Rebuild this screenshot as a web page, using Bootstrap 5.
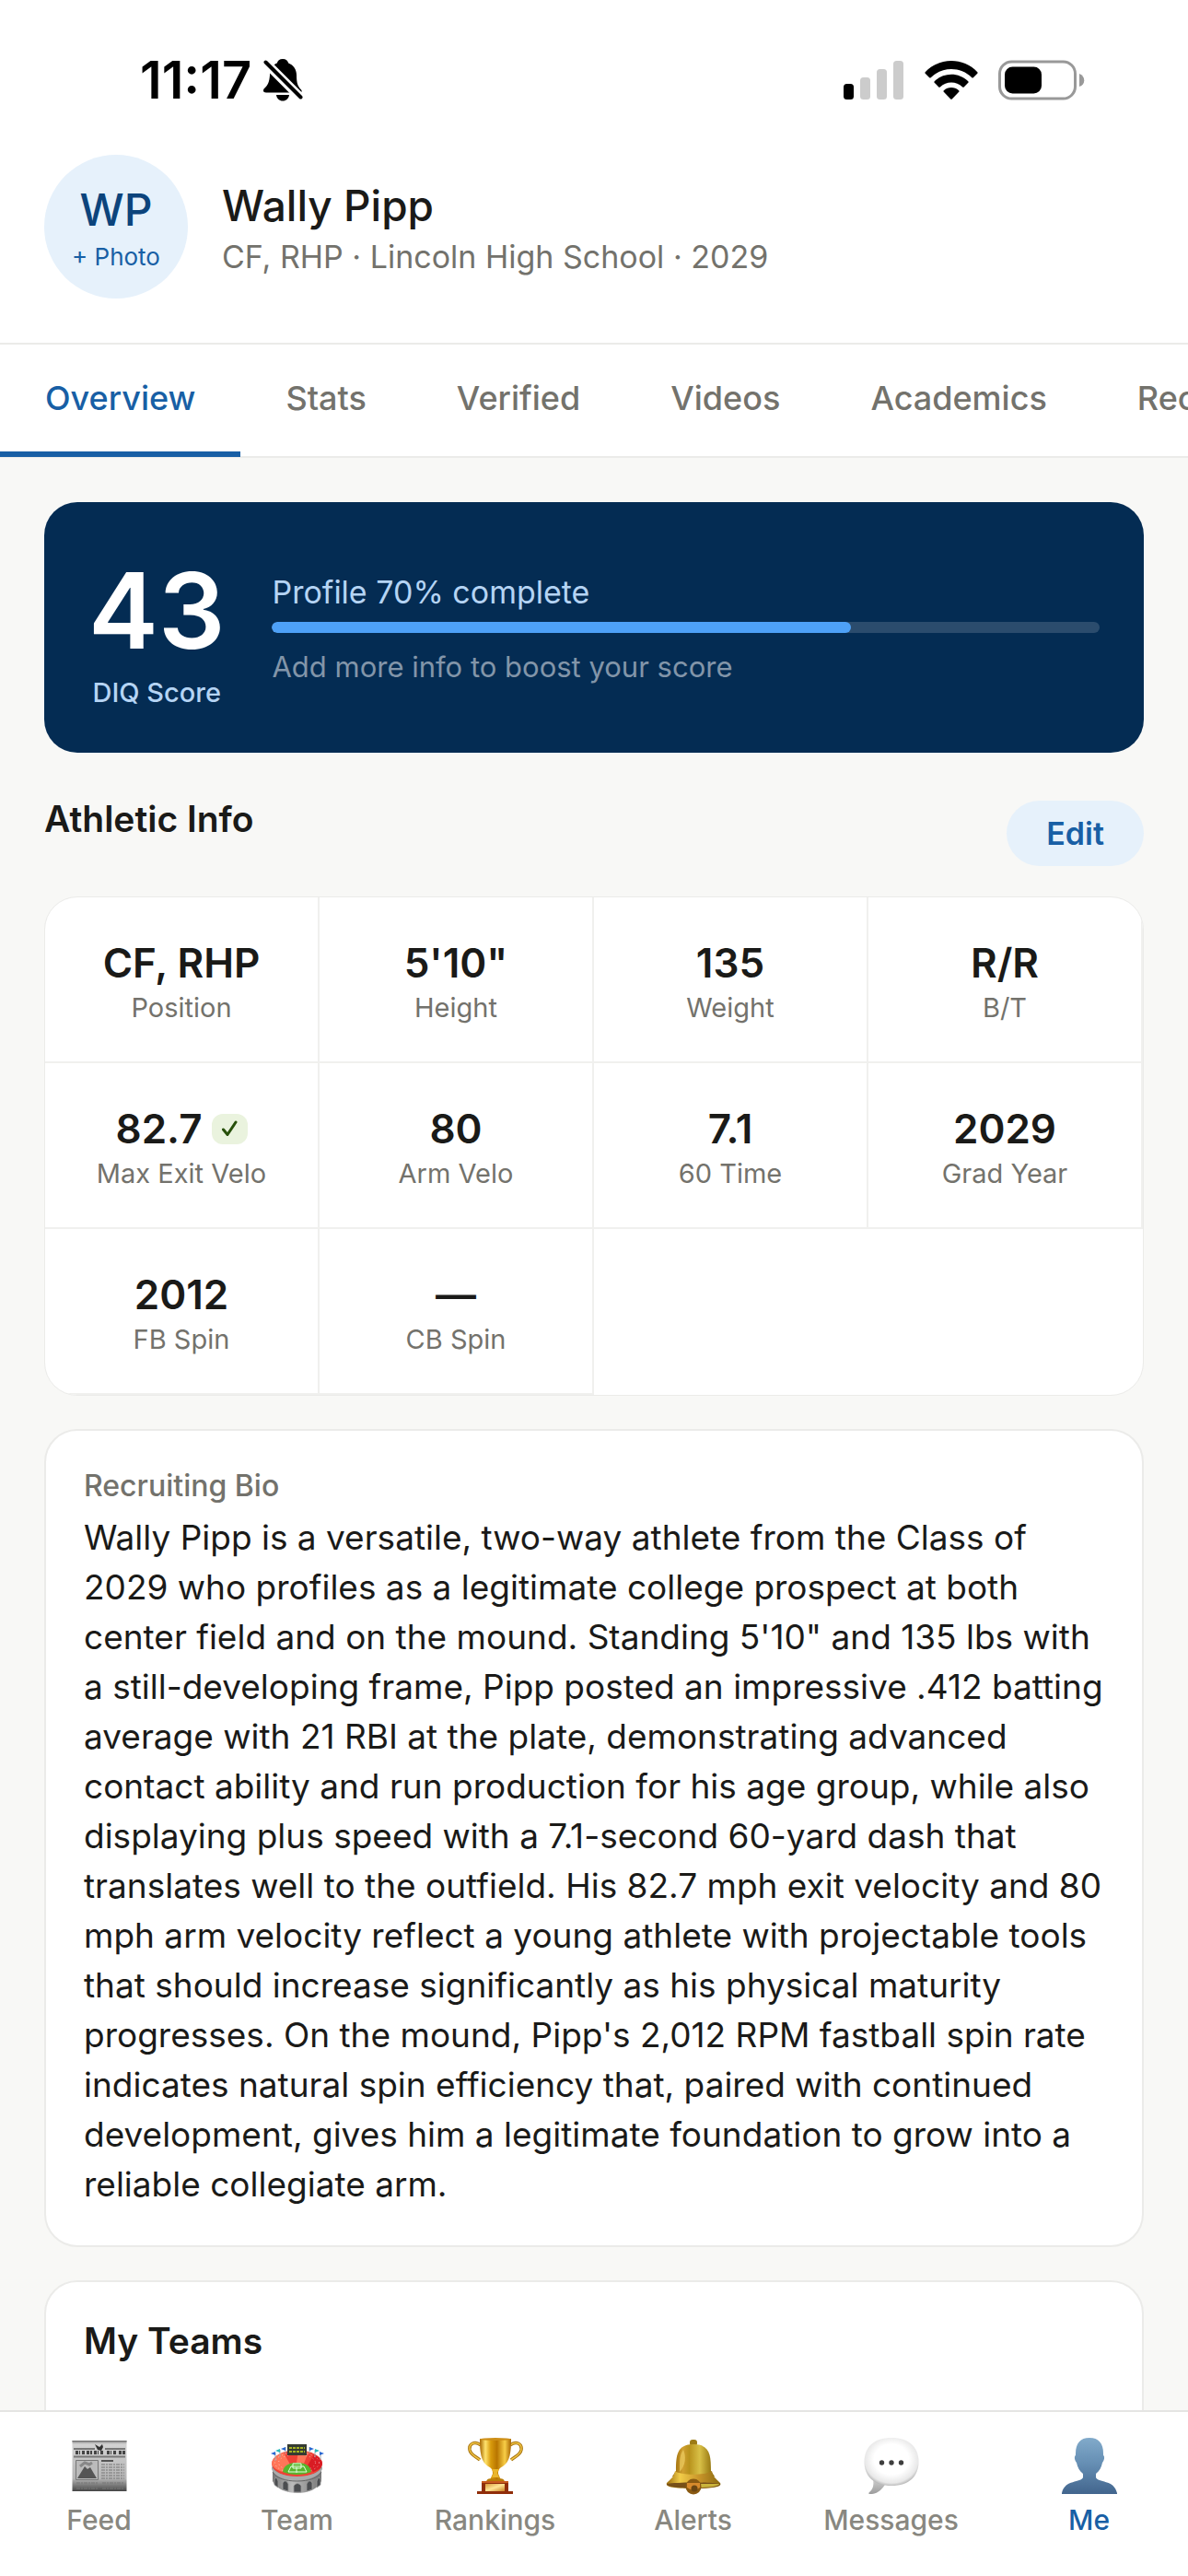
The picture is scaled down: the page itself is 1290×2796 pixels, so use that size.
<!DOCTYPE html>
<html lang="en">
<head>
<meta charset="utf-8">
<meta name="viewport" content="width=device-width, initial-scale=1">
<title>Wally Pipp – Player Profile</title>
<link rel="stylesheet" href="https://cdn.jsdelivr.net/npm/bootstrap@5.3.0/dist/css/bootstrap.min.css">
<style>
:root{--ink:#1a1a18;--muted-ink:#73726c;--blue:#185fa5;--navy:#042c53;--pale:#e6f1fb;--line:#ebebe9}
body{font-family:Inter,"Liberation Sans",sans-serif;color:var(--ink);background:#f8f8f6}
h1,h2,p,dl,dd,dt{margin:0}
.status-bar{height:138px;padding:36px 112px 0 152px;color:#000}
.status-left{gap:13px}
.status-right{gap:22px}
.clock{font-size:56px;line-height:60px;font-weight:600}
.profile-head{padding:30px 48px 48px;gap:37px;border-bottom:2px solid var(--line)}
.avatar{width:156px;height:156px;padding-top:4px;background:var(--pale);color:#0c447c;border:0}
.avatar-initials{font-size:48px;line-height:58px;font-weight:500}
.avatar-hint{font-size:26px;line-height:36px;margin-top:4px;color:var(--blue)}
.player-name{font-size:46px;line-height:58px;font-weight:500}
.player-sub{font-size:34px;line-height:46px;margin-top:4px;color:var(--muted-ink)}
.tab-strip{overflow:hidden;padding-bottom:1px;box-shadow:inset 0 -2px 0 var(--line)}
.tab-strip .nav-link{font-size:36px;line-height:48px;font-weight:500;padding:34px 49px;border-bottom:6px solid transparent;color:var(--muted-ink);white-space:nowrap}
.tab-strip .nav-link.active{color:var(--blue);border-color:var(--blue)}
.scroll-area{min-height:0;overflow-y:auto;scrollbar-width:none;padding:48px 48px 0}
.scroll-area::-webkit-scrollbar{display:none}
.scroll-area>*{flex-shrink:0}
.score-card{background:var(--navy);border-radius:36px;padding:58px 48px 44px;gap:51px;color:#b5d4f4}
.score-num{font-size:114px;line-height:120px;font-weight:600;color:#fff}
.score-label{font-size:29px;line-height:42px;margin-top:8px;font-weight:500}
.score-body{padding-bottom:10px}
.score-title{font-size:34px;line-height:40px}
.score-card .progress{height:12px;margin:12px 0 17px;border-radius:6px;background:#2b4c6d}
.score-card .progress-bar{background:#4ea1f7;border-radius:6px}
.score-hint{font-size:31px;line-height:40px;color:#8295a9}
.section-head{margin-top:48px}
.section-title{font-size:39px;line-height:48px;font-weight:600}
.edit-btn{margin-top:4px;padding:12px 43px;font-size:34px;line-height:47px;font-weight:600;color:var(--blue);background:var(--pale);border:0}
.panel{background:#fff;border:2px solid var(--line);border-radius:36px;margin-top:36px;padding:40px 36px 39px 41px}
.stat-grid{background:#fff;border:1px solid var(--line);border-radius:36px;margin-top:33px;overflow:hidden}
.stat-cell{padding:43px 0 37px;border-right:2px solid #f0f0ee;border-bottom:2px solid #f0f0ee}
.stat-value{font-size:44px;line-height:56px;font-weight:600}
.stat-label{font-size:29px;line-height:42px;font-weight:400;color:var(--muted-ink)}
.verified{width:39px;height:33px;margin-left:10px;border-radius:12px;background:#eaf3de}
.bio-label{font-size:32px;line-height:40px;font-weight:500;color:var(--muted-ink)}
.bio-text{font-size:37px;line-height:54px;margin-top:9px}
.teams-panel{padding-bottom:120px}
.bottom-nav{background:#fff;border-top:2px solid #e5e5e3;padding:26px 0 42px}
.bottom-nav a{font-size:30px;line-height:38px;font-weight:500;color:#888780;gap:8px}
.bottom-nav a.current{color:var(--blue)}
</style>
</head>
<body class="vh-100 d-flex flex-column overflow-hidden">
<div class="bg-white flex-shrink-0">
  <div class="status-bar d-flex align-items-center justify-content-between">
    <div class="status-left d-flex align-items-center">
      <span class="clock">11:17</span>
      <svg width="43" height="48" viewBox="0 0 43 48" aria-label="Silent mode"><path d="M21 1c3.500 0 5.500 1.800 6.200 4.500 5.500 2.200 8.800 7 8.800 13 0 9 1.500 12 4.600 15.500 2.800 3-.3 3.500-1.600 3.500H3c-3.500 0-4-3-1.500-5C5 29 6.500 26 7 18.500 7.300 12 10 7.500 14.800 5.500 15.500 2.800 17.500 1 21 1z"/><path d="M14 40h14c-.5 4-3.300 6.500-7 6.500S14.500 44 14 40z"/><path d="M2 4.500 41 43.500" stroke="#fff" stroke-width="10"/><path d="M2.500 4.500 40.500 42.500" stroke="#000" stroke-width="4" stroke-linecap="round"/></svg>
    </div>
    <div class="status-right d-flex align-items-center">
      <svg width="66" height="42" viewBox="0 0 66 42" aria-label="Signal"><rect y="25" width="11" height="17" rx="3.500"/><g fill="#ccc"><rect x="18" y="18" width="11" height="24" rx="3.500"/><rect x="36" y="9" width="11" height="33" rx="3.500"/><rect x="54" width="11" height="42" rx="3.500"/></g></svg>
      <svg width="58" height="42" viewBox="0 0 58 42" aria-label="Wi-Fi"><path d="M.7 12.200C16-4 42-4 57.300 12.200c.5.600.5 1 0 1.500l-4.500 4.500c-.5.500-1 .5-1.500 0C39 6 19 6 6.700 18.200c-.5.500-1 .5-1.500 0L.7 13.700c-.5-.5-.5-.9 0-1.500zM10.700 22.300c10-10.200 26.600-10.200 36.600 0 .5.500.5 1 0 1.500l-4.600 4.600c-.5.500-1 .5-1.500 0-7-6.600-17.400-6.600-24.400 0-.5.500-1 .5-1.500 0l-4.600-4.600c-.5-.5-.5-1 0-1.500zM20.800 32.300c4.600-4.300 11.800-4.300 16.400 0 .5.500.5 1 0 1.500l-7.200 7.400c-.7.700-1.300.7-2 0l-7.200-7.400c-.5-.5-.5-1 0-1.500z"/></svg>
      <svg width="94" height="44" viewBox="0 0 94 44" aria-label="Battery"><rect x="1.500" y="2" width="82" height="40" rx="13" fill="none" stroke="#999" stroke-width="3"/><rect x="7" y="7.500" width="40" height="29" rx="8.500"/><path d="M88 15c7 2.500 7 12 0 14z" fill="#999"/></svg>
    </div>
  </div>
  <header class="profile-head d-flex align-items-center">
    <button type="button" class="avatar rounded-circle d-flex flex-column align-items-center justify-content-center flex-shrink-0"><span class="avatar-initials">WP</span><span class="avatar-hint">+ Photo</span></button>
    <div class="pt-1">
      <h1 class="player-name">Wally Pipp</h1>
      <p class="player-sub">CF, RHP · Lincoln High School · 2029</p>
    </div>
  </header>
  <nav class="tab-strip nav flex-nowrap" aria-label="Profile sections">
    <a class="nav-link active" aria-current="page" href="#overview">Overview</a>
    <a class="nav-link" href="#stats">Stats</a>
    <a class="nav-link" href="#verified">Verified</a>
    <a class="nav-link" href="#videos">Videos</a>
    <a class="nav-link" href="#academics">Academics</a>
    <a class="nav-link" href="#recruiting">Recruiting</a>
  </nav>
</div>

<main class="scroll-area flex-fill d-flex flex-column" id="overview">
  <section class="score-card d-flex align-items-center">
    <div class="text-center flex-shrink-0">
      <div class="score-num">43</div>
      <div class="score-label">DIQ Score</div>
    </div>
    <div class="score-body flex-fill">
      <div class="score-title">Profile 70% complete</div>
      <div class="progress" role="progressbar" aria-label="Profile completion" aria-valuenow="70" aria-valuemin="0" aria-valuemax="100"><div class="progress-bar" style="width:70%"></div></div>
      <div class="score-hint">Add more info to boost your score</div>
    </div>
  </section>

  <div class="section-head d-flex justify-content-between align-items-start">
    <h2 class="section-title">Athletic Info</h2>
    <button type="button" class="edit-btn btn rounded-pill">Edit</button>
  </div>

  <dl class="stat-grid row row-cols-4 g-0">
    <div class="col stat-cell d-flex flex-column-reverse text-center"><dt class="stat-label">Position</dt><dd class="stat-value">CF, RHP</dd></div>
    <div class="col stat-cell d-flex flex-column-reverse text-center"><dt class="stat-label">Height</dt><dd class="stat-value">5'10"</dd></div>
    <div class="col stat-cell d-flex flex-column-reverse text-center"><dt class="stat-label">Weight</dt><dd class="stat-value">135</dd></div>
    <div class="col stat-cell d-flex flex-column-reverse text-center"><dt class="stat-label">B/T</dt><dd class="stat-value">R/R</dd></div>
    <div class="col stat-cell d-flex flex-column-reverse text-center"><dt class="stat-label">Max Exit Velo</dt><dd class="stat-value d-flex justify-content-center align-items-center">82.7<span class="verified d-flex align-items-center justify-content-center"><svg width="19" height="18" viewBox="0 0 19 18" fill="none" stroke="#27500a" stroke-width="3" stroke-linecap="round" stroke-linejoin="round" aria-label="Verified"><path d="M2.500 10 7 15.500 16 2"/></svg></span></dd></div>
    <div class="col stat-cell d-flex flex-column-reverse text-center"><dt class="stat-label">Arm Velo</dt><dd class="stat-value">80</dd></div>
    <div class="col stat-cell d-flex flex-column-reverse text-center"><dt class="stat-label">60 Time</dt><dd class="stat-value">7.1</dd></div>
    <div class="col stat-cell d-flex flex-column-reverse text-center"><dt class="stat-label">Grad Year</dt><dd class="stat-value">2029</dd></div>
    <div class="col stat-cell d-flex flex-column-reverse text-center"><dt class="stat-label">FB Spin</dt><dd class="stat-value">2012</dd></div>
    <div class="col stat-cell d-flex flex-column-reverse text-center"><dt class="stat-label">CB Spin</dt><dd class="stat-value">—</dd></div>
  </dl>

  <section class="panel">
    <h2 class="bio-label">Recruiting Bio</h2>
    <p class="bio-text">Wally Pipp is a versatile, two-way athlete from the Class of 2029 who profiles as a legitimate college prospect at both center field and on the mound. Standing 5'10" and 135 lbs with a still-developing frame, Pipp posted an impressive .412 batting average with 21 RBI at the plate, demonstrating advanced contact ability and run production for his age group, while also displaying plus speed with a 7.1-second 60-yard dash that translates well to the outfield. His 82.7 mph exit velocity and 80 mph arm velocity reflect a young athlete with projectable tools that should increase significantly as his physical maturity progresses. On the mound, Pipp's 2,012 RPM fastball spin rate indicates natural spin efficiency that, paired with continued development, gives him a legitimate foundation to grow into a reliable collegiate arm.</p>
  </section>

  <section class="panel teams-panel">
    <h2 class="section-title">My Teams</h2>
  </section>
</main>

<nav class="bottom-nav row row-cols-6 g-0 flex-shrink-0" aria-label="Main">
  <a class="col d-flex flex-column align-items-center text-decoration-none" href="#feed">
    <svg width="60" height="64" viewBox="0 0 60 64" aria-hidden="true"><defs><linearGradient id="paper" x2="0" y2="1"><stop stop-color="#9a9a9a"/><stop offset=".08" stop-color="#d2d2d2"/><stop offset=".75" stop-color="#b5b5b5"/><stop offset="1" stop-color="#454545"/></linearGradient></defs><path d="M.5 5h59v55H.5z" fill="url(#paper)"/><path d="M.5 5h59v1.500H.5z" fill="#777"/><path d="M2 14h23M36 14h22M2 22.500h56" stroke="#777" stroke-width="2"/><path d="M25 9l5 3 3-3 1 3-2 4-4-1z" fill="#333"/><path d="M4 18h5m2 0h3m2 0h6m2 0h5m2 0h4m3 0h5m2 0h4m2 0h8" stroke="#444" stroke-width="4" stroke-dasharray="3 1"/><path d="M4.500 26.500h24v21h-24z" fill="#bbb" stroke="#777"/><path d="M6 46l8-13 3 3 3-2 7 12z" fill="#555"/><path d="M9 33l5-4 5 2 3-2" stroke="#888" stroke-width="3" fill="none"/><path d="M32 27h13" stroke="#555" stroke-width="2"/><path d="M32 31h25M32 34h25M32 37h25M32 40h25M32 43h25M32 46h25M5 51h24M5 54h24M5 57h24M33 51h24M33 54h24M33 57h24" stroke="#777" stroke-width="1.200" stroke-dasharray="4 1 2 1"/></svg>
    <span>Feed</span></a>
  <a class="col d-flex flex-column align-items-center text-decoration-none" href="#team">
    <svg width="60" height="64" viewBox="0 0 60 64" aria-hidden="true"><defs><linearGradient id="wall"><stop stop-color="#777"/><stop offset=".4" stop-color="#bbb"/><stop offset="1" stop-color="#777"/></linearGradient></defs><path d="M3 30v19c4 9 16 13 27 13s22-4 26-13V30z" fill="url(#wall)"/><ellipse cx="29.500" cy="30" rx="27.500" ry="14.500" fill="#ef4135"/><path d="M2 30C3 24 8 20 15 18l7 13-8 8C7 37 3 34 2 30zM31 16l11 1-5 13-8-1z" fill="#ff7558"/><path d="M48 20c7 4 9 7 9 10 0 4-4 7-10 9l-6-7z" fill="#d91c24"/><g stroke="#fff" stroke-opacity=".55" stroke-dasharray="1 3" fill="none"><ellipse cx="29.500" cy="29" rx="24" ry="11"/><ellipse cx="29.500" cy="29" rx="20" ry="9"/></g><path d="M14 39c1-9 10-10 16-10s14 2 15 10c-9 4-22 4-31 0z" fill="#58b52c"/><path d="M20 39l3-6h14l3 6zM29 34v6M25 30h9v5h-9z" fill="none" stroke="#e5ffe0"/><path d="M2 32c2 8 14 12 27.500 12S55 40 57 32v4c-3 8-15 12-27.500 12S4 44 2 36z" fill="#aaa"/><path d="M3 39c4 7 14 10 26.500 10S52 46 56 39" fill="none" stroke="#666"/><g fill="#4b4d50" stroke="#999" stroke-width=".8"><path d="M5 53v-6q2-4 4 2v7zM14 58v-7q3-5 6 1v8zM26 61v-7q4-5 8 0v7zM40 60v-8q3-6 6-1v7zM51 56v-7q2-6 4-2v6z"/></g><path d="M6 27V18M11 23V15M17 19V12M43 19V12M49 23V15M55 26V18" stroke="#aaa"/><path d="M6 17v4l-5-2zM17 12v4l-5-2zM43 12v4l5-2zM54 17v4l5-2z" fill="#2867d2"/><path d="M11 14v4l-5-2zM49 14v4l5-2z" fill="#27b9b9"/><path d="M19 9h21v12H19z" fill="#353b32"/><path d="M21 13h17M21 17h17" stroke="#a5b324" stroke-width="2" stroke-dasharray="3 1"/></svg>
    <span>Team</span></a>
  <a class="col d-flex flex-column align-items-center text-decoration-none" href="#rankings">
    <svg width="60" height="64" viewBox="0 0 60 64" aria-hidden="true"><defs><linearGradient id="gold"><stop stop-color="#a66600"/><stop offset=".18" stop-color="#ffe36e"/><stop offset=".35" stop-color="#d89a0c"/><stop offset=".55" stop-color="#b87500"/><stop offset=".8" stop-color="#f8ce47"/><stop offset="1" stop-color="#a56300"/></linearGradient><linearGradient id="plate" x2="1" y2="1"><stop stop-color="#d89a3a"/><stop offset=".5" stop-color="#ffe596"/><stop offset="1" stop-color="#c98224"/></linearGradient></defs><path d="M14 10C8 5 1 8 2 15c1 6 8 8 11 11M46 10c6-5 13-2 12 5-1 6-8 8-11 11" fill="none" stroke="#a87410" stroke-width="3.500"/><path d="M14 10C8 5 1 8 2 15c1 6 8 8 11 11M46 10c6-5 13-2 12 5-1 6-8 8-11 11" fill="none" stroke="#f1c544" stroke-width="1.500"/><path d="M13 3h34c0 14-1 25-9 30-4 2-5 4-5 8l4 9H23l4-9c0-4-1-6-5-8C14 28 13 17 13 3z" fill="url(#gold)"/><ellipse cx="30" cy="3.500" rx="17" ry="1.500" fill="#ce8f17"/><path d="M26 36h8l-2 4 2 5h-8l2-5z" fill="#eab52b"/><path d="M20 50c0-4 5-5 10-2 5-3 10-2 10 2z" fill="#b97d08"/><path d="M15 49h29v11h5v3H10v-3h5z" fill="#902e0a"/><path d="M15 49h29v2H15z" fill="#c95b20"/><path d="M19 52h21v8H19z" fill="url(#plate)"/></svg>
    <span>Rankings</span></a>
  <a class="col d-flex flex-column align-items-center text-decoration-none" href="#alerts">
    <svg width="60" height="64" viewBox="0 0 60 64" aria-hidden="true"><defs><linearGradient id="brass"><stop stop-color="#916000"/><stop offset=".25" stop-color="#d0a030"/><stop offset=".4" stop-color="#b8921c"/><stop offset=".65" stop-color="#d8c047"/><stop offset=".85" stop-color="#a88a1f"/><stop offset="1" stop-color="#826300"/></linearGradient><linearGradient id="brim"><stop stop-color="#9c6c0c"/><stop offset=".25" stop-color="#f1cc48"/><stop offset=".6" stop-color="#c9952a"/><stop offset="1" stop-color="#8a6a10"/></linearGradient></defs><rect x="26" y="4" width="8" height="7" rx="3" fill="#9d7b16"/><path d="M11 38c0-17 1-29 19-29s19 12 19 29l4 6H7z" fill="url(#brass)"/><path d="M10 38c6 5 33 5 40 0 1 6 4 8 9 13 3 5-10 6-29 6S-1 56 1 51c5-5 8-7 9-13z" fill="url(#brim)"/><path d="M1 52c10-2 48-2 58 0 1 3-12 5-29 5S0 55 1 52z" fill="#775018"/><path d="M38 52h20c0 2-9 4-20 4z" fill="#cab43c"/><circle cx="30" cy="55" r="8.500" fill="#8a5a12"/><path d="M23 51h14v5q-7 5-14 0z" fill="#d78a2c"/><circle cx="31" cy="57" r="3.500" fill="#6b4613"/><path d="M15 35c0-9 0-15 4-20 3 7 3 16-4 24z" fill="#edcd63" fill-opacity=".7"/></svg>
    <span>Alerts</span></a>
  <a class="col d-flex flex-column align-items-center text-decoration-none" href="#messages">
    <svg width="60" height="64" viewBox="0 0 60 64" aria-hidden="true"><defs><radialGradient id="bubble" cx=".5" cy=".45" r=".58"><stop offset=".55" stop-color="#fff"/><stop offset=".85" stop-color="#e8e8e8"/><stop offset="1" stop-color="#a8a8a8"/></radialGradient><linearGradient id="tail" x2="0" y2="1"><stop stop-color="#d8d8d8"/><stop offset="1" stop-color="#9c9c9c"/></linearGradient></defs><path d="M9 44c3 8 1 14-3 17-2 2 0 2 3 2 7-1 11-5 15-12z" fill="url(#tail)"/><path d="M30 2c19 0 29.500 10 29.500 26S49 54 30 54 .5 44 .5 28 11 2 30 2z" fill="url(#bubble)"/><g fill="#3e3e3e"><circle cx="19.500" cy="29" r="2.700"/><circle cx="30" cy="29" r="2.700"/><circle cx="40.500" cy="29" r="2.700"/></g></svg>
    <span>Messages</span></a>
  <a class="col d-flex flex-column align-items-center text-decoration-none current" aria-current="page" href="#me">
    <svg width="60" height="64" viewBox="0 0 60 64" aria-hidden="true"><defs><linearGradient id="bust" x2="0" y2="1"><stop stop-color="#81aaca"/><stop offset=".45" stop-color="#668fb4"/><stop offset="1" stop-color="#42658d"/></linearGradient></defs><path d="M30 2c10 0 15 6 15 17v2c2 1 1 6-1 8-1 5-3 9-7 12v4c2 6 20 2 23 17v1H0v-1c3-15 21-11 23-17v-4c-4-3-6-7-7-12-2-2-3-7-1-8v-2C15 8 20 2 30 2z" fill="url(#bust)"/></svg>
    <span>Me</span></a>
</nav>
<script src="https://cdn.jsdelivr.net/npm/bootstrap@5.3.0/dist/js/bootstrap.bundle.min.js"></script>
</body>
</html>
